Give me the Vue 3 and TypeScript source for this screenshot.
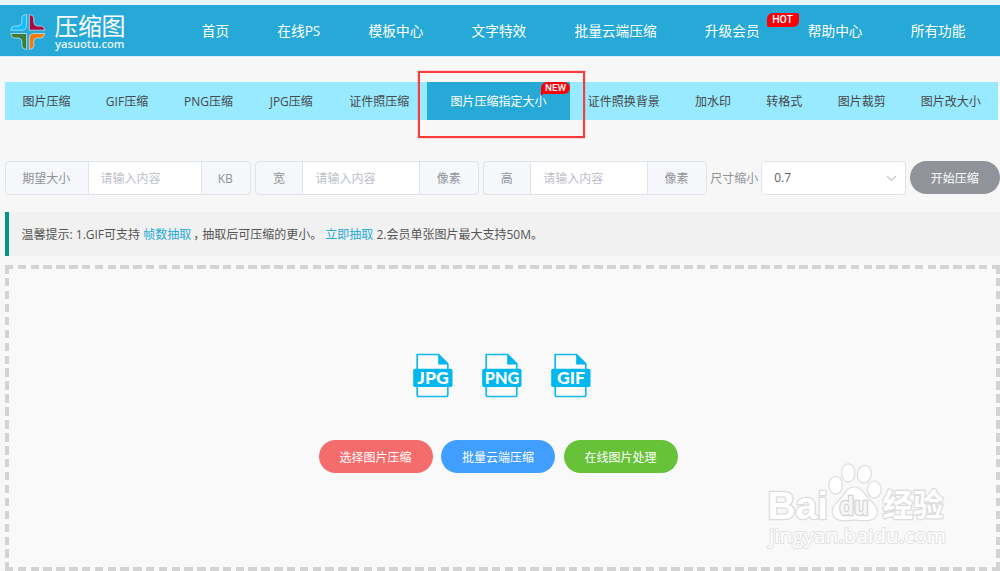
<script setup lang="ts">
interface Tab {
  label: string
  active?: boolean
}

interface SizeField {
  label: string
  unit: string
  kind: string
}

const navItems: string[] = ['首页', '在线PS', '模板中心', '文字特效', '批量云端压缩', '升级会员', '帮助中心', '所有功能']

const tabs: Tab[] = [
  { label: '图片压缩' },
  { label: 'GIF压缩' },
  { label: 'PNG压缩' },
  { label: 'JPG压缩' },
  { label: '证件照压缩' },
  { label: '图片压缩指定大小', active: true },
  { label: '证件照换背景' },
  { label: '加水印' },
  { label: '转格式' },
  { label: '图片裁剪' },
  { label: '图片改大小' },
]

const fields: SizeField[] = [
  { label: '期望大小', unit: 'KB', kind: 'target' },
  { label: '宽', unit: '像素', kind: 'dimension' },
  { label: '高', unit: '像素', kind: 'dimension' },
]

const formats: string[] = ['JPG', 'PNG', 'GIF']

const actions = [
  { label: '选择图片压缩', tone: 'red' },
  { label: '批量云端压缩', tone: 'blue' },
  { label: '在线图片处理', tone: 'green' },
]
</script>

<template>
  <div class="page">
    <header class="header">
      <svg class="logo" width="120" height="51" viewBox="0 0 120 51">
        <g stroke="#a9dcef" stroke-width=".9">
          <path d="M16.6 9.5 Q12 9.8 11.8 13 V17.5 Q11.6 20.8 8 21 H4.5 Q1 21.5.6 25.2 H12 Q16.3 25 16.6 20.5Z" fill="#14bdfb" />
          <path d="M19.3 9.5 Q23.4 9.8 23.8 13 V17.5 Q24.2 20.8 27.4 21 H31.3 Q34.4 21.5 34.8 25.2 H19.3Z" fill="#a80b3e" />
          <path d="M.6 28.5 H16.6 V44.6 Q12.3 44.3 11.8 40.5 V35.8 Q11.5 33.2 8 33 H4.3 Q1 32.7.6 28.5Z" fill="#427a36" />
          <path d="M19.3 44.6 V32 Q19.8 28.8 23 28.5 H34.8 Q34.4 32.7 31.2 33 H27 Q24.2 33.2 23.9 36 V40.5 Q23.5 44.3 19.3 44.6Z" fill="#fb7908" />
        </g>
        <text class="brand" x="44.5" y="29.5" textLength="71">压缩图</text>
        <text class="domain" x="45" y="42.5" textLength="69.5" lengthAdjust="spacingAndGlyphs">yasuotu.com</text>
      </svg>
      <nav class="nav">
        <a v-for="item in navItems" :key="item">
          {{ item }}<span v-if="item === '升级会员'" class="hot">HOT</span>
        </a>
      </nav>
    </header>

    <div class="tabs">
      <a v-for="tab in tabs" :key="tab.label" :class="{ active: tab.active }">
        <span>{{ tab.label }}</span>
        <span v-if="tab.active" class="new">NEW</span>
      </a>
      <div class="frame"></div>
    </div>

    <div class="form">
      <div v-for="field in fields" :key="field.label" class="group" :class="field.kind">
        <span class="addon">{{ field.label }}</span>
        <span class="input">请输入内容</span>
        <span class="addon">{{ field.unit }}</span>
      </div>
      <span class="scale">尺寸缩小</span>
      <div class="select">
        <span>0.7</span>
        <svg width="11" height="7" viewBox="0 0 11 7"><path d="M1 1 L5.5 5.5 L10 1" fill="none" stroke="#c0c4cc" stroke-width="1.1" /></svg>
      </div>
      <button class="start">开始压缩</button>
    </div>

    <div class="notice">
      <p>温馨提示: 1.GIF可支持 <a>帧数抽取</a><span class="comma">，</span>抽取后可压缩的更小。 <a>立即抽取</a> 2.会员单张图片最大支持50M。</p>
    </div>

    <main class="drop">
      <div class="formats">
        <svg v-for="format in formats" :key="format" width="40" height="45" viewBox="0 0 40 45">
          <path d="M4.2 1.5 H25.5 L34.8 10.8 V41.7 Q34.8 43.5 33 43.5 H6 Q4.2 43.5 4.2 41.7Z" fill="#fbfbfb" stroke="#10b9ee" stroke-width="1.7" />
          <path d="M25.2.8 L35.6 11.6 H25.2Z" fill="#00b4ed" />
          <rect x=".2" y="15.8" width="39.3" height="18.2" rx="1.8" fill="#00b7f0" />
          <text class="format" x="20" y="31.2" text-anchor="middle" :textLength="format === 'GIF' ? 28 : format === 'PNG' ? 34.5 : 31.5" lengthAdjust="spacingAndGlyphs">{{ format }}</text>
        </svg>
      </div>
      <div class="actions">
        <button v-for="action in actions" :key="action.label" :class="action.tone">{{ action.label }}</button>
      </div>
      <svg class="watermark" width="200" height="92" viewBox="0 0 200 92">
        <g class="mark">
          <text class="bai" x="6.5" y="58.5" textLength="60.5" lengthAdjust="spacingAndGlyphs">Bai</text>
          <ellipse cx="74.7" cy="25.3" rx="6.8" ry="8.8" />
          <ellipse cx="87.3" cy="13" rx="6.7" ry="9.2" />
          <ellipse cx="103.3" cy="14.2" rx="7" ry="8.8" transform="rotate(10 103.3 14.2)" />
          <ellipse cx="113.3" cy="29.6" rx="6.9" ry="8.6" />
          <path d="M93 27 C100 27 103 33 108 39 C114 44 118 49 116 55 C113 62 104 61 93 60 C83 61 75 62 72 55 C69 48 75 43 80 38 C84 33 86 27 93 27Z" />
          <text class="du" x="78.5" y="54.5" textLength="29" lengthAdjust="spacingAndGlyphs">du</text>
          <text class="jy" x="121.5" y="56" textLength="61" lengthAdjust="spacingAndGlyphs">经验</text>
          <text class="url" x="8" y="82.5" textLength="177" lengthAdjust="spacingAndGlyphs">jingyan.baidu.com</text>
        </g>
      </svg>
    </main>
  </div>
</template>

<style>
body {
  background: #f7f7f7;
  overflow: hidden;
}
</style>

<style scoped>
.page {
  box-sizing: border-box;
  width: 1000px;
  height: 571px;
  overflow: hidden;
  background: #f7f7f7;
  color: #555;
  font: 12px/18px 'Open Sans', 'Noto Sans CJK SC', sans-serif;
}

.page * {
  box-sizing: border-box;
}

.header {
  display: flex;
  height: 57px;
  padding-left: 9.5px;
  border-top: 5px solid #e8f5fe;
  border-bottom: 1px solid #d4edf6;
  background: #26a9d7;
}

.logo {
  flex: none;
}

.brand {
  fill: #fff;
  font-size: 24px;
  font-weight: 400;
}

.domain {
  fill: #e6f6fb;
  font-size: 11px;
  font-weight: 600;
}

.nav {
  display: flex;
  gap: 48.2px;
  margin-left: 72.2px;
  color: #fff;
  font-size: 13.7px;
  line-height: 51px;
  white-space: nowrap;
}

.nav a {
  position: relative;
}

.hot {
  position: absolute;
  top: 8px;
  right: -39px;
  width: 32px;
  height: 14px;
  border-radius: 6px 2px 6px 2px;
  background: #fb0007;
  font: 500 10.5px/14px Roboto, sans-serif;
  text-align: center;
}

.tabs {
  position: relative;
  display: grid;
  grid-template-columns: 83px 78px 85px 80.5px 95.5px 143px 107.5px 71px 71.5px 83.5px 94.5px;
  width: 993px;
  height: 38px;
  margin: 25px 0 0 5px;
  background: #97eaff;
  color: #484848;
  line-height: 40px;
  text-align: center;
  white-space: nowrap;
}

.tabs a {
  position: relative;
  height: 38px;
}

.tabs .active {
  background: #26a9d7;
  color: #fff;
}

.new {
  position: absolute;
  top: 0;
  right: 0;
  width: 29px;
  height: 12px;
  border-radius: 6px 6px 6px 0;
  background: #fb0007;
  font: 500 9.8px/12px Roboto, sans-serif;
}

.new::after {
  position: absolute;
  top: 10px;
  left: 0;
  border-top: 4px solid #fb0007;
  border-right: 4px solid transparent;
  content: '';
}

.frame {
  position: absolute;
  top: -11px;
  left: 413px;
  width: 167px;
  height: 67px;
  border: 2.5px solid #fa3b3b;
  box-shadow: 0 0 1px #fa3b3b;
}

.form {
  display: flex;
  height: 34px;
  margin: 41px 0 0 5px;
}

.group {
  display: grid;
  flex: none;
  width: 223.5px;
  margin-right: 4.4px;
  overflow: hidden;
  border: 1px solid #dfe3ea;
  border-radius: 4px;
  background: #f5f7fa;
  color: #909399;
  line-height: 33px;
}

.target {
  grid-template-columns: 81.5px 114px 1fr;
  width: 246px;
}

.dimension {
  grid-template-columns: 46px 118px 1fr;
}

.addon {
  text-align: center;
}

.addon:last-child {
  padding-right: 1px;
}

.addon:first-child {
  padding-right: 1px;
}

.input {
  padding-left: 12px;
  border: solid #dfe3ea;
  border-width: 0 1px;
  background: #fff;
  color: #bcc0c8;
}

.scale {
  flex: none;
  width: 50.5px;
  margin-left: -1px;
  color: #909399;
  line-height: 36px;
  white-space: nowrap;
}

.select {
  display: flex;
  flex: none;
  align-items: center;
  justify-content: space-between;
  width: 145px;
  padding: 0 8px 0 12.5px;
  border: 1px solid #dfe3ea;
  border-radius: 4px;
  background: #fff;
  color: #606266;
}

button {
  padding: 2px 0 0;
  border: 0;
  border-radius: 17px;
  color: #fff;
  font: inherit;
}

.start {
  flex: none;
  width: 90px;
  height: 33px;
  margin-left: 4px;
  background: #909399;
}

.notice {
  height: 44px;
  margin: 17px 0 0 5px;
  padding-left: 12.5px;
  border-left: 4px solid #009688;
  background: #f1f1f1;
  line-height: 45px;
  white-space: nowrap;
}

.notice p {
  margin: 0;
}

.notice a {
  color: #26a9d7;
}

.comma {
  display: inline-block;
  width: 11px;
  text-indent: 2px;
}

.drop {
  --dash: #d3d3d3;
  position: relative;
  display: flex;
  flex-direction: column;
  align-items: center;
  height: 306px;
  margin: 9px 0 0 5px;
  padding-top: 88px;
  background:
    repeating-linear-gradient(90deg, var(--dash) 0 8.5px, transparent 8.5px 12.814px) top / 100% 4px no-repeat,
    repeating-linear-gradient(90deg, var(--dash) 0 8.5px, transparent 8.5px 12.814px) bottom / 100% 4px no-repeat,
    repeating-linear-gradient(180deg, var(--dash) 0 8.5px, transparent 8.5px 12.93px) left / 4px 100% no-repeat,
    repeating-linear-gradient(180deg, var(--dash) 0 8.5px, transparent 8.5px 12.93px) right / 4px 100% no-repeat,
    #f9f9f9;
}

.formats {
  display: flex;
  gap: 29px;
  margin-right: 2px;
}

.format {
  fill: #fff;
  font: 900 17.5px Lato, sans-serif;
}

.actions {
  display: flex;
  gap: 8.5px;
  margin: 42px 9px 0 0;
}

.actions button {
  width: 114px;
  height: 33px;
}

.red {
  background: #f56c6c;
}

.blue {
  background: #409eff;
}

.green {
  background: #67c23a;
}

.watermark {
  position: absolute;
  top: 195px;
  left: 756px;
}

.mark {
  fill: #fff;
  stroke: #dcdcdc;
  stroke-width: 1.2;
}

.mark text {
  paint-order: stroke;
  stroke-width: 2.6;
  stroke-linejoin: round;
}

.bai {
  font: 700 39px 'Liberation Sans', sans-serif;
}

.mark .du {
  fill: #f6f6f6;
  stroke: #d2d2d2;
  font: 700 25px 'Liberation Sans', sans-serif;
}

.jy {
  font: 700 31px 'Noto Sans CJK SC', sans-serif;
}

.mark .url {
  stroke: #e2e2e2;
  stroke-width: 2;
  font: 400 20.5px 'Open Sans', sans-serif;
}
</style>
